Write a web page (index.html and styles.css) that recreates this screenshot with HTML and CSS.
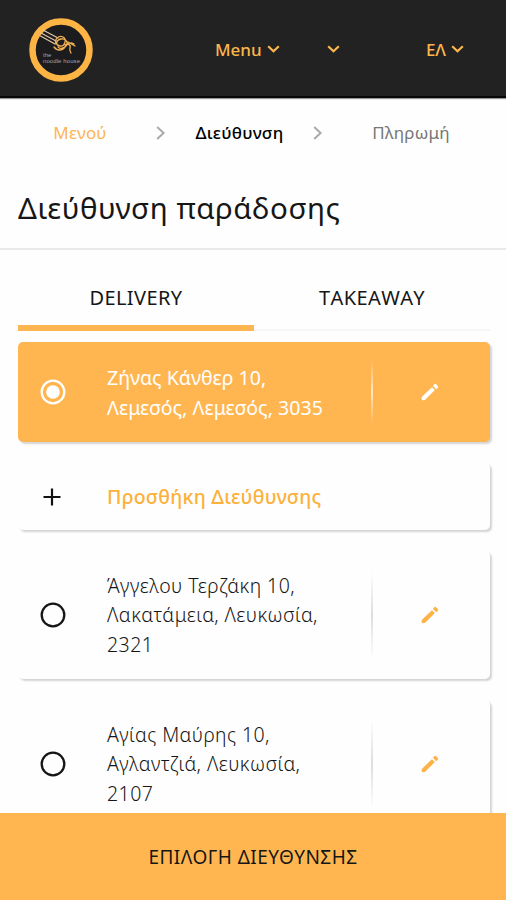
FILE: index.html
```
<!DOCTYPE html>
<html lang="el">
<head>
<meta charset="utf-8">
<title>Διεύθυνση παράδοσης</title>
<link rel="stylesheet" href="styles.css">
</head>
<body>
<svg class="defs" width="0" height="0">
  <symbol id="pencil" viewBox="0 0 24 24"><path d="M3.600 16.8Q2.400 18 2.800 19.600Q3.300 21.300 5 21.100Q6.200 21 7 20.200L17.300 9.900 14.060 6.700zM20.71 7.04a1 1 0 0 0 0-1.41l-2.34-2.34a1 1 0 0 0-1.41 0l-1.83 1.83 3.75 3.75 1.83-1.83z"/></symbol>
  <symbol id="chevron" viewBox="0 0 13 8"><path d="M1.2 1.2 6.5 6.3 11.8 1.2" fill="none" stroke="currentColor" stroke-width="2.2"/></symbol>
  <symbol id="next" viewBox="0 0 10 14"><path d="M1.2 1 7.6 7 1.2 13" fill="none" stroke="currentColor" stroke-width="2"/></symbol>
</svg>
<div class="screen">
  <header class="topbar">
    <svg class="logo" viewBox="0 0 64 64">
      <circle cx="32" cy="32" r="28.5" fill="#1c1b1e" stroke="#fcb545" stroke-width="6.5"/>
      <g fill="none" stroke-linecap="round">
        <path d="M12 15 27 23M11.500 18 26 26M14 12 29 20" stroke="#dfc7a3" stroke-width="1.300"/>
        <path d="M27 26c-2-5 3-9 7-7s2 10-3 9-4-6 1-7 8 4 5 7-7 3-8 1M25 29c3 4 8 4 11 0s5-5 9-3M36 27c3-2 6 0 5 3s1 4 1 5M39 24l7 4" stroke="#f4b252" stroke-width="1.300"/>
      </g>
      <text class="logo-text" x="14" y="38.500">the</text>
      <text class="logo-text" x="14" y="44.500" textLength="37">noodle house</text>
    </svg>
    <nav class="nav">
      <a class="nav-item nav-menu"><span>Menu</span><svg class="chevron"><use href="#chevron"/></svg></a>
      <a class="nav-item nav-store"><svg class="chevron"><use href="#chevron"/></svg></a>
      <a class="nav-item nav-lang"><span>ΕΛ</span><svg class="chevron"><use href="#chevron"/></svg></a>
    </nav>
  </header>
  <nav class="steps">
    <span class="step done">Μενού</span>
    <svg class="next"><use href="#next"/></svg>
    <span class="step current">Διεύθυνση</span>
    <svg class="next"><use href="#next"/></svg>
    <span class="step pending">Πληρωμή</span>
  </nav>
  <h1 class="title">Διεύθυνση παράδοσης</h1>
  <main class="content">
    <div class="tabs">
      <div class="tab active">DELIVERY</div>
      <div class="tab">TAKEAWAY</div>
    </div>
    <section class="cards">
      <div class="card selected">
        <svg class="radio" viewBox="0 0 26 26"><circle cx="13" cy="13" r="11.300"/><circle class="dot" cx="13" cy="13" r="6.800"/></svg>
        <p class="address">Ζήνας Κάνθερ 10,<br>Λεμεσός, Λεμεσός, 3035</p>
        <i class="divider"></i>
        <svg class="pencil"><use href="#pencil"/></svg>
      </div>
      <div class="card add">
        <svg class="plus" viewBox="0 0 18 18"><path d="M9 .5v17M.5 9h17"/></svg>
        <p class="address">Προσθήκη Διεύθυνσης</p>
      </div>
      <div class="card">
        <svg class="radio" viewBox="0 0 26 26"><circle cx="13" cy="13" r="11.300"/></svg>
        <p class="address">Άγγελου Τερζάκη 10,<br>Λακατάμεια, Λευκωσία,<br>2321</p>
        <i class="divider"></i>
        <svg class="pencil"><use href="#pencil"/></svg>
      </div>
      <div class="card">
        <svg class="radio" viewBox="0 0 26 26"><circle cx="13" cy="13" r="11.300"/></svg>
        <p class="address">Αγίας Μαύρης 10,<br>Αγλαντζιά, Λευκωσία,<br>2107</p>
        <i class="divider"></i>
        <svg class="pencil"><use href="#pencil"/></svg>
      </div>
    </section>
  </main>
  <button class="submit">ΕΠΙΛΟΓΗ ΔΙΕΥΘΥΝΣΗΣ</button>
</div>
</body>
</html>
```
FILE: styles.css
```
* { box-sizing: border-box; }
body { margin: 0; background: #fefefe; font-family: "Noto Sans", "Open Sans", sans-serif; color: #161616; }
svg { flex: none; display: block; }
.defs { position: absolute; }
.screen { height: 900px; display: flex; flex-direction: column; overflow: hidden; }
.topbar { height: 98px; flex: none; background: #222; border-bottom: 2px solid #080808; box-shadow: 0 1px 1px #999; display: flex; align-items: center; padding: 3px 42px 0 29px; }
.logo { width: 64px; height: 64px; }
.logo-text { font-family: "Liberation Sans", sans-serif; font-size: 6px; fill: #a5a3a8; }
.nav { flex: 1; display: flex; align-items: center; color: #fdb64c; font-size: 17px; font-weight: 500; }
.nav-item { display: flex; align-items: center; gap: 5px; }
.nav-menu { margin-left: 122px; }
.nav-store { margin-left: 47px; }
.nav-lang { margin-left: auto; }
.chevron { width: 13px; height: 8px; margin-top: -2px; }
.steps { height: 71px; flex: none; display: grid; grid-template-columns: 128px 10px 119px 10px 148px; column-gap: 14px; padding: 0 0 2px 14px; align-items: center; justify-items: center; font-size: 17px; letter-spacing: .2px; }
.next { width: 10px; height: 14px; color: #aaa; }
.done { color: #fdb555; margin-left: 4px; }
.current { font-weight: 500; color: #000; letter-spacing: .3px; }
.pending { color: #777; }
.title { margin: 0; height: 81px; flex: none; padding-left: 18px; border-bottom: 2px solid #e9e9e9; font-size: 29.500px; font-weight: 400; line-height: 78px; letter-spacing: .58px; }
.content { flex: 1; min-height: 0; overflow: hidden; padding: 0 16px 0 18px; }
.tabs { display: grid; grid-template-columns: 1fr 1fr; height: 81px; border-bottom: 2px solid #f6f6f6; }
.tab { height: 81px; text-align: center; font-size: 20px; line-height: 95px; font-kerning: none; letter-spacing: .4px; }
.active { border-bottom: 6px solid #ffb651; }
.cards { margin-top: 11px; display: flex; flex-direction: column; gap: 21px; }
.card { display: flex; align-items: center; flex: none; min-height: 67px; padding: 20px 0 20px 22px; border-radius: 5px; background: #fefefe; box-shadow: 2px 2px 2px rgba(0,0,0,.17); }
.radio { width: 26px; height: 26px; fill: none; stroke: #161616; stroke-width: 2.300; margin-right: 41px; }
.address { margin: 0; width: 264px; font-size: 19.500px; line-height: 29.300px; font-weight: 300; white-space: nowrap; letter-spacing: .44px; }
.divider { flex: none; width: 2px; height: 88px; background: linear-gradient(transparent, #ddd, transparent); }
.pencil { width: 22px; height: 22px; margin-left: 46px; fill: #fdb347; }
.selected { background: #ffb651; color: #fff; height: 100px; }
.selected .radio { stroke: #fff; }
.selected .dot { fill: #fff; stroke: none; }
.selected .divider { height: 64px; margin: -4px 0; background: linear-gradient(transparent, #ffe8c8, transparent); }
.selected .pencil { fill: #fff; }
.selected .address { font-weight: 400; letter-spacing: .06px; padding-top: 1px; }
.add { padding-top: 18px; padding-bottom: 18px; padding-left: 25px; }
.plus { width: 18px; height: 18px; margin-right: 46px; stroke: #111; stroke-width: 2.200; }
.add .address { color: #fdb03a; font-weight: 500; letter-spacing: .25px; }
.submit { flex: none; height: 87px; border: 0; background: #ffb651; color: #161616; font: 400 19px "Noto Sans", sans-serif; letter-spacing: .48px; }
```
